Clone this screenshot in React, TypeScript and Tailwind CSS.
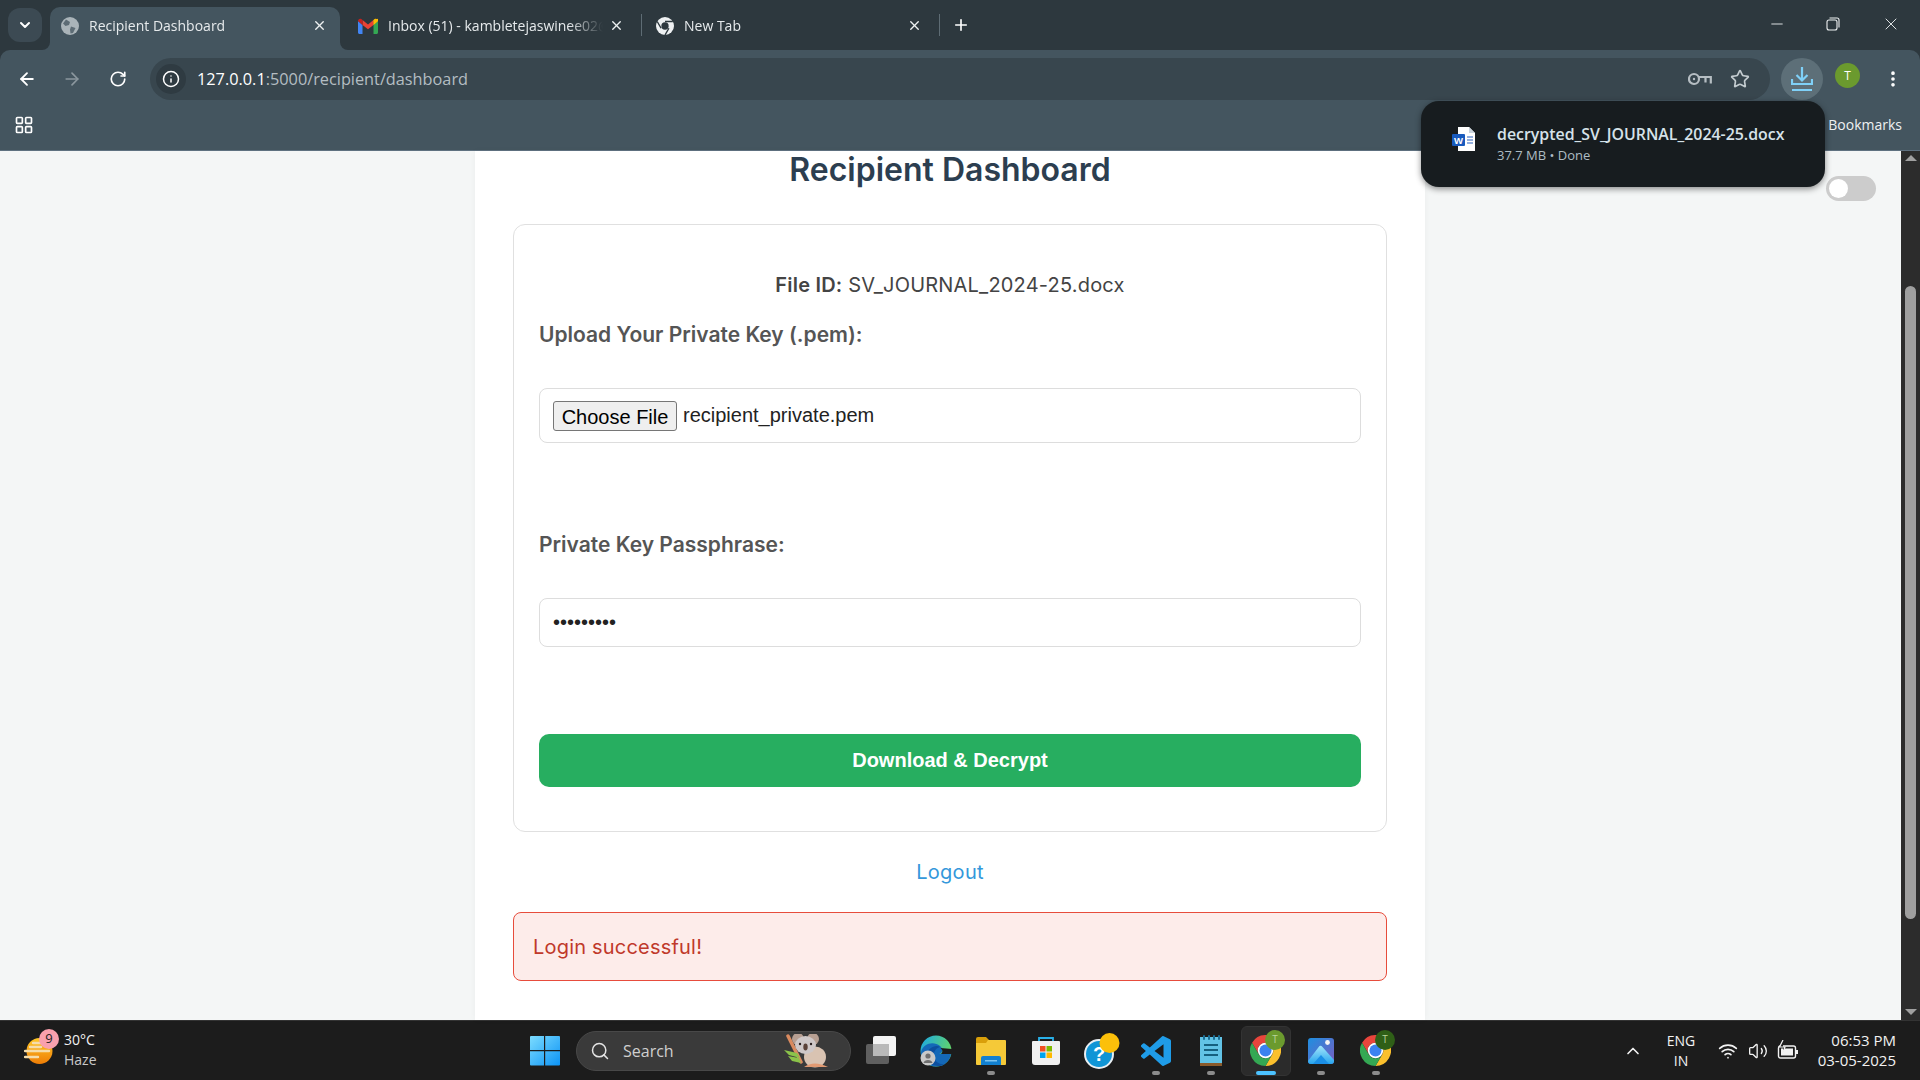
import React from 'react';
import { ArrowLeft, ArrowRight, ChevronDown, ChevronUp, EllipsisVertical, Info, LayoutGrid, Minus, Plus, RotateCw, Search, Star, Volume2, Wifi, X } from 'lucide-react';

const ChromeIcon = ({ size = 32 }: { size?: number }) => (
  <svg width={size} height={size} viewBox="0 0 32 32">
    <path d="M2.14 8A16 16 0 0 1 29.86 8H16A8 8 0 0 0 9.07 20Z" fill="#e8453c" />
    <path d="M29.86 8A16 16 0 0 1 16 32L22.93 20A8 8 0 0 0 16 8Z" fill="#fbc02d" />
    <path d="M16 32A16 16 0 0 1 2.14 8L9.07 20A8 8 0 0 0 22.93 20Z" fill="#34a853" />
    <circle cx="16" cy="16" r="8" fill="#fff" />
    <circle cx="16" cy="16" r="6.2" fill="#3b82f0" />
  </svg>
);

const NewTabIcon = () => (
  <svg width="18" height="18" viewBox="0 0 32 32">
    <circle cx="16" cy="16" r="16" fill="#eef1f2" />
    <path d="M16 8H29.86M9.07 20L2.14 8M22.93 20L16 32" stroke="#2d383e" strokeWidth="2.5" />
    <circle cx="16" cy="16" r="6.5" fill="#2d383e" />
  </svg>
);

const GlobeIcon = () => (
  <svg width="18" height="18" viewBox="0 0 18 18">
    <circle cx="9" cy="9" r="9" fill="#aab4b9" />
    <path d="M5 2.5L9 5 8 8 4.5 9 2 6.5ZM10 9.5L14.5 11 12 16 9.5 16.5 9 12.5Z" fill="#5d6c75" />
  </svg>
);

const GmailIcon = () => (
  <svg width="20" height="16" viewBox="0 0 20 16">
    <path d="M0 3V14.5C0 15.3.7 16 1.5 16H4.5V7Z" fill="#4285f4" />
    <path d="M20 3V14.5C20 15.3 19.3 16 18.5 16H15.5V7Z" fill="#34a853" />
    <path d="M15.5 2L20 0.8V3L15.5 7Z" fill="#fbbc04" />
    <path d="M4.5 2L10 6.5 15.5 2V7L10 11.2 4.5 7Z" fill="#ea4335" />
    <path d="M0 3C0 1 2.5 -.5 4.5 2V7Z" fill="#c5221f" />
    <path d="M15.5 2C17.5 -.5 20 1 20 3L15.5 7Z" fill="#fbbc04" />
  </svg>
);

const KeyIcon = () => (
  <svg width="24" height="14" viewBox="0 0 24 14" fill="none" stroke="#b6bec3" strokeWidth="2.2">
    <circle cx="6" cy="7" r="5" />
    <path d="M11 5H22.8V11.5M17.5 5V10.5" />
    <circle cx="6" cy="7" r="1.2" fill="#b6bec3" stroke="none" />
  </svg>
);

const WordIcon = () => (
  <svg width="24" height="24" viewBox="0 0 24 24">
    <path d="M6 0H17L23 6V24H6Z" fill="#fff" />
    <path d="M17 0L23 6H17Z" fill="#c9d3dc" />
    <path d="M15 10H21M15 13H21M15 16H21" stroke="#2b63c0" strokeWidth="1.2" />
    <rect x="0" y="7" width="13" height="12" rx="1" fill="#185abd" />
    <text x="6.5" y="16.5" textAnchor="middle" fontSize="9.5" fontWeight="700" fontFamily="Liberation Sans" fill="#fff">W</text>
  </svg>
);

const WeatherIcon = () => (
  <svg width="30" height="30" viewBox="0 0 30 30">
    <defs>
      <linearGradient id="sun" x1="0" y1="0" x2="0" y2="1">
        <stop offset="0" stopColor="#ffc928" />
        <stop offset="1" stopColor="#ee7d06" />
      </linearGradient>
    </defs>
    <circle cx="15.5" cy="15" r="13" fill="url(#sun)" />
    <path d="M9 7H19M1 15H25M1 21H14M6 11H17" stroke="#f6ddaa" strokeWidth="2.4" strokeLinecap="round" />
  </svg>
);

const WinLogo = () => (
  <svg width="30" height="30" viewBox="0 0 30 30">
    <defs>
      <linearGradient id="win" x1="0" y1="0" x2="1" y2="1">
        <stop offset="0" stopColor="#7cdcff" />
        <stop offset="1" stopColor="#0c93f5" />
      </linearGradient>
    </defs>
    <path d="M1 0H14V14H0V1Q0 0 1 0ZM15.2 0H29Q30 0 30 1V14H15.2ZM0 15.2H14V29.5H1Q0 29.5 0 28.5ZM15.2 15.2H30V28.5Q30 29.5 29 29.5H15.2Z" fill="url(#win)" />
  </svg>
);

const Koala = () => (
  <svg width="48" height="34" viewBox="0 0 48 34">
    <path d="M4 2L17 28" stroke="#d98a5f" strokeWidth="3.5" strokeLinecap="round" />
    <path d="M0 16L13 19 16 24 5 21ZM4 22L15 24 17 29 8 27Z" fill="#8bc34a" />
    <ellipse cx="31" cy="23" rx="11" ry="10.5" fill="#d9c3b2" />
    <path d="M20 33Q30 26 44 33Z" fill="#e29a72" />
    <circle cx="14" cy="5" r="6" fill="#b79f92" />
    <circle cx="29" cy="5" r="6" fill="#b79f92" />
    <ellipse cx="21.5" cy="11" rx="10.5" ry="9" fill="#cfc8c8" />
    <ellipse cx="21.5" cy="13" rx="2.2" ry="3.4" fill="#5b4238" />
    <circle cx="16" cy="10" r="1.2" fill="#2b2020" />
    <circle cx="27" cy="10" r="1.2" fill="#2b2020" />
  </svg>
);

const TaskView = () => (
  <svg width="30" height="30" viewBox="0 0 30 30">
    <rect x="0" y="8" width="23" height="20" rx="2" fill="#5f5f5f" />
    <rect x="7" y="0" width="23" height="20" rx="2" fill="#f4f4f4" />
    <rect x="7" y="8" width="16" height="12" fill="#b9b9b9" />
  </svg>
);

const EdgeIcon = () => (
  <svg width="32" height="32" viewBox="0 0 32 32">
    <defs>
      <linearGradient id="edge" x1="0" y1="0" x2="1" y2="0.4">
        <stop offset="0" stopColor="#1aa7e8" />
        <stop offset="1" stopColor="#62d46a" />
      </linearGradient>
    </defs>
    <circle cx="16" cy="16" r="15.5" fill="url(#edge)" />
    <path d="M1 17C3 8 14 6 20 11C24 14 22 19 19 19H31C30 27 23 31.5 16 31.5C8 31.5 1 25 1 17Z" fill="#1468b8" />
    <path d="M20.5 13Q24 16 21 19H32V14Z" fill="#1c1c1c" />
    <path d="M7 20C7 13 16 9 20 12C16 13 13 17 14 22C15 27 20 30 25 29C20 33 7 31 7 20Z" fill="#0d4f9e" />
    <circle cx="8" cy="23" r="7.5" fill="#c9c9c9" />
    <circle cx="8" cy="21" r="2.6" fill="#6f6f6f" />
    <path d="M3.5 28C4 24 12 24 12.5 28Z" fill="#6f6f6f" />
  </svg>
);

const FolderIcon = () => (
  <svg width="30" height="28" viewBox="0 0 30 28">
    <path d="M0 2Q0 0 2 0H10L13 3H0Z" fill="#d99f0a" />
    <path d="M0 3H29Q30 3 30 4V27Q30 28 29 28H1Q0 28 0 27Z" fill="#f5c938" />
    <path d="M0 3H12L10 6H0Z" fill="#d99f0a" />
    <path d="M5 28V21Q5 19 7 19H23Q25 19 25 21V28Z" fill="#1280d0" />
    <rect x="9" y="23" width="12" height="1.5" fill="#7cc4f0" />
  </svg>
);

const StoreIcon = () => (
  <svg width="30" height="30" viewBox="0 0 30 30">
    <path d="M8 7V2H22V7" fill="none" stroke="#29b0e8" strokeWidth="1.8" />
    <path d="M2 5H28Q29 5 29 6V26Q29 29 26 29H4Q1 29 1 26V6Q1 5 2 5Z" fill="#f0f0f0" />
    <rect x="9" y="10" width="5.5" height="5.5" fill="#f25022" />
    <rect x="15.5" y="10" width="5.5" height="5.5" fill="#7fba00" />
    <rect x="9" y="16.5" width="5.5" height="5.5" fill="#00a4ef" />
    <rect x="15.5" y="16.5" width="5.5" height="5.5" fill="#ffb900" />
  </svg>
);

const HelpIcon = () => (
  <svg width="36" height="36" viewBox="0 0 36 36" className="ml-[3px]">
    <circle cx="15" cy="21" r="14" fill="#0f95d6" stroke="#e8eef2" strokeWidth="2" />
    <text x="15" y="28" textAnchor="middle" fontSize="20" fontWeight="700" fontFamily="Liberation Sans" fill="#fff">?</text>
    <circle cx="25.5" cy="10" r="10" fill="#fcc00a" />
  </svg>
);

const VsCodeIcon = () => (
  <svg width="30" height="30" viewBox="0 0 24 24">
    <path d="M23.15 2.587L18.21.21a1.494 1.494 0 0 0-1.705.29l-9.46 8.63-4.12-3.128a.999.999 0 0 0-1.276.057L.327 7.261A1 1 0 0 0 .326 8.74L3.899 12 .326 15.26a1 1 0 0 0 .001 1.479L1.65 17.94a.999.999 0 0 0 1.276.057l4.12-3.128 9.46 8.63a1.492 1.492 0 0 0 1.704.29l4.942-2.377A1.5 1.5 0 0 0 24 20.06V3.939a1.5 1.5 0 0 0-.85-1.352zm-5.146 14.861L10.826 12l7.178-5.448v10.896z" fill="#1f9ce8" />
  </svg>
);

const NotepadIcon = () => (
  <svg width="24" height="32" viewBox="0 0 24 32">
    <rect x="1" y="2" width="22" height="27" fill="#62c3e6" />
    <rect x="1" y="28" width="22" height="3" fill="#8a5a2b" />
    <path d="M5 1V4M10 1V4M15 1V4M20 1V4" stroke="#1b6f96" strokeWidth="2" strokeLinecap="round" />
    <path d="M5 10H19M5 15H19M5 20H19" stroke="#16607f" strokeWidth="2" />
  </svg>
);

const PhotosIcon = () => (
  <svg width="26" height="26" viewBox="0 0 26 26">
    <defs>
      <linearGradient id="photo" x1="0" y1="0" x2="1" y2="1">
        <stop offset="0" stopColor="#1e8fe0" />
        <stop offset="1" stopColor="#7a5cc0" />
      </linearGradient>
      <linearGradient id="hill" x1="0" y1="0" x2="0" y2="1">
        <stop offset="0" stopColor="#a4e6fb" />
        <stop offset="1" stopColor="#26a4ee" />
      </linearGradient>
    </defs>
    <rect width="26" height="26" rx="3" fill="url(#photo)" />
    <path d="M0 23L11.5 8Q13 7 14.5 9L26 22V23Q26 26 23 26H3Q0 26 0 23Z" fill="url(#hill)" />
    <path d="M5 26L13 17 21 26Z" fill="#1b8fe6" />
    <circle cx="19.5" cy="4.5" r="2.4" fill="#f4f4f4" />
  </svg>
);

const BatteryIcon = () => (
  <svg width="22" height="22" viewBox="0 0 22 22" fill="none" stroke="#f2f2f2" strokeWidth="1.4">
    <rect x="1.5" y="6" width="17" height="12" rx="2" />
    <rect x="4" y="8.5" width="12" height="7" fill="#f2f2f2" stroke="none" />
    <path d="M20 10V14" strokeWidth="2" />
    <path d="M6 0L2.5 7H8L6 12" strokeWidth="1.2" fill="#1c1c1c" />
  </svg>
);

const Tab = ({ icon, title, className, titleClass = 'text-[#e6eaec]', active = false }: { icon: React.ReactNode; title: string; className: string; titleClass?: string; active?: boolean }) => (
  <div className={`relative h-[43px] flex items-center shrink-0 pb-[6px] ${active ? 'bg-[#44555f] rounded-t-[10px]' : ''} ${className}`}>
    {active && (
      <>
        <div className="absolute bottom-0 -left-[8px] w-[8px] h-[8px] bg-[#44555f]">
          <div className="w-full h-full bg-[#2d383e] rounded-br-[8px]" />
        </div>
        <div className="absolute bottom-0 -right-[8px] w-[8px] h-[8px] bg-[#44555f]">
          <div className="w-full h-full bg-[#2d383e] rounded-bl-[8px]" />
        </div>
      </>
    )}
    <div className="shrink-0 flex items-center justify-center">{icon}</div>
    <span className={`flex-1 min-w-0 ml-[10px] text-[14px] whitespace-nowrap overflow-hidden [mask-image:linear-gradient(to_right,black_84%,transparent)] ${titleClass}`}>{title}</span>
    <X size={15} strokeWidth={2.2} className="shrink-0 text-[#eef1f2] ml-[6px]" />
  </div>
);

const TaskIcon = ({ children, dot = false }: { children: React.ReactNode; dot?: boolean }) => (
  <div className="relative w-[55px] h-[60px] shrink-0 flex items-center justify-center">
    {children}
    {dot && <div className="absolute bottom-[6px] left-[24px] w-[8px] h-[4px] rounded-full bg-[#8c8c8c]" />}
  </div>
);

const Badge = ({ className }: { className: string }) => (
  <div className={`absolute top-[9px] left-[27px] w-[20px] h-[20px] rounded-full flex items-center justify-center text-[10px] text-[#b9d39a] ${className}`}>T</div>
);

export default function App() {
  return (
    <div className="h-screen w-full flex flex-col overflow-hidden relative bg-[#2d383e] font-['Open_Sans',sans-serif]">
      {/* Tab strip */}
      <div className="h-[50px] shrink-0 flex items-end relative">
        <div className="absolute left-[8px] top-[8px] w-[34px] h-[34px] rounded-[12px] bg-[#3c4a53] flex items-center justify-center">
          <ChevronDown size={16} strokeWidth={3} className="text-white" />
        </div>
        <div className="w-[50px] shrink-0" />
        <Tab active icon={<GlobeIcon />} title="Recipient Dashboard" className="w-[290px] pl-[11px] pr-[13px]" />
        <Tab icon={<GmailIcon />} title="Inbox (51) - kambletejaswinee02@gmail.com" className="w-[301px] pl-[18px] pr-[17px]" />
        <div className="w-px h-[22px] bg-[#5e6c74] mb-[14px]" />
        <Tab icon={<NewTabIcon />} title="New Tab" className="w-[297px] pl-[14px] pr-[17px]" />
        <div className="w-px h-[22px] bg-[#5e6c74] mb-[14px]" />
        <Plus size={18} strokeWidth={2.2} className="ml-[12px] mb-[16px] text-white" />
        <div className="ml-auto flex items-center h-full pb-[2px] text-[#eef1f2]">
          <Minus size={18} strokeWidth={1.2} className="mr-[40px]" />
          <svg width="14" height="14" viewBox="0 0 14 14" fill="none" stroke="#eef1f2" strokeWidth="1.1" className="mr-[41px]">
            <rect x="1" y="3" width="10" height="10" rx="2" />
            <path d="M3.5 1H11Q13 1 13 3V10.5" />
          </svg>
          <X size={20} strokeWidth={1.1} className="mr-[19px]" />
        </div>
      </div>

      {/* Toolbar */}
      <div className="h-[50px] shrink-0 flex items-start pt-[8px] bg-[#44555f] rounded-t-[10px]">
        <div className="w-[150px] h-[42px] shrink-0 flex items-center">
          <ArrowLeft size={20} strokeWidth={2.2} className="ml-[17px] text-white" />
          <ArrowRight size={20} strokeWidth={2} className="ml-[25px] text-[#8b979e]" />
          <RotateCw size={18} strokeWidth={2.2} className="ml-[27px] text-white" />
        </div>
        <div className="w-[1620px] h-[42px] shrink-0 rounded-full bg-[#38464e] flex items-center pl-[6px] pr-[20px]">
          <div className="w-[30px] h-[30px] rounded-full bg-[#2f3b42] flex items-center justify-center">
            <Info size={18} strokeWidth={2} className="text-white" />
          </div>
          <span className="ml-[11px] pt-[1px] text-[16.3px] text-white">127.0.0.1<span className="text-[#b4bdc2]">:5000/recipient/dashboard</span></span>
          <div className="ml-auto flex items-center gap-[18px]">
            <KeyIcon />
            <Star size={20} strokeWidth={2} className="text-[#c4ccd0]" />
          </div>
        </div>
        <div className="ml-[11px] w-[42px] h-[42px] rounded-full bg-[#5d6f78] flex items-center justify-center">
          <svg width="22" height="26" viewBox="0 0 22 26" fill="none" stroke="#7fd0f7" strokeWidth="2.2">
            <path d="M11 1V14M5.5 9L11 14.5 16.5 9M1 13V18H21V13M1 24H21" />
          </svg>
        </div>
        <div className="ml-[12px] mt-[5px] w-[25px] h-[25px] rounded-full bg-[#6b9a2e] flex items-center justify-center text-[12px] text-white">T</div>
        <EllipsisVertical size={20} strokeWidth={2.4} className="ml-[23px] mt-[11px] text-white" />
      </div>

      {/* Bookmarks bar */}
      <div className="h-[51px] shrink-0 flex items-center bg-[#44555f] border-b border-[#5f7180] pl-[14px] pr-[18px]">
        <LayoutGrid size={20} strokeWidth={2} className="text-white" />
        <span className="ml-auto pb-[1px] text-[14px] text-[#eef1f2]">Bookmarks</span>
      </div>

      {/* Page */}
      <div className="flex-1 min-h-0 flex relative">
        <div className="flex-1 min-w-0 bg-[#f4f6f6]">
          <div className="w-[950px] h-full ml-[475px] bg-white px-[38px] font-['Inter',sans-serif] shadow-[0_0_6px_rgba(0,0,0,0.04)]">
            <h1 className="h-[36px] leading-[38px] text-center text-[32px] font-semibold text-[#2c3e50]">Recipient Dashboard</h1>
            <div className="mt-[37px] border border-[#e0e0e0] rounded-[12px] px-[25px] pt-[45px] pb-[44px]">
              <p className="h-[30px] leading-[30px] text-center text-[20px] tracking-[0.2px] text-[#444]"><span className="font-semibold">File ID:</span> SV_JOURNAL_2024-25.docx</p>
              <label className="block mt-[20px] h-[30px] leading-[30px] text-[21px] font-semibold text-[#555]">Upload Your Private Key (.pem):</label>
              <div className="mt-[38px] h-[55px] border border-[#ddd] rounded-[8px] flex items-center pl-[13px] font-['Liberation_Sans',sans-serif] text-[20px] text-[#222]">
                <button className="w-[124px] h-[30px] pb-[4px] bg-[#efefef] border border-[#767676] rounded-[3px] text-black text-[20px]">Choose File</button>
                <span className="ml-[6px] mb-[2px]">recipient_private.pem</span>
              </div>
              <label className="block mt-[87px] h-[30px] leading-[30px] text-[21px] font-semibold text-[#555]">Private Key Passphrase:</label>
              <input type="password" readOnly value="123456789" className="mt-[38px] block w-full h-[49px] border border-[#ddd] rounded-[8px] pl-[13px] font-['Liberation_Sans',sans-serif] text-[20px] text-[#222] outline-none" />
              <button className="mt-[87px] w-full h-[53px] pb-[2px] bg-[#27ae60] rounded-[10px] text-white text-[20px] font-bold font-['Liberation_Sans',sans-serif]">Download &amp; Decrypt</button>
            </div>
            <p className="mt-[25px] h-[30px] leading-[30px] text-center text-[20px] tracking-[0.3px] text-[#3498db]">Logout</p>
            <div className="mt-[25px] h-[69px] border border-[#e74c3c] rounded-[8px] bg-[#fdecea] flex items-center pl-[19px] text-[20px] tracking-[0.2px] text-[#c0392b]">Login successful!</div>
          </div>
        </div>
        {/* Scrollbar */}
        <div className="w-[19px] shrink-0 bg-[#2c2c2c] flex flex-col items-center">
          <div className="mt-[4px] w-0 h-0 border-x-[6px] border-x-transparent border-b-[6px] border-b-[#a0a0a0]" />
          <div className="mt-[125px] w-[11px] h-[633px] rounded-full bg-[#9f9f9f]" />
          <div className="mt-auto mb-[5px] w-0 h-0 border-x-[6px] border-x-transparent border-t-[6px] border-t-[#a0a0a0]" />
        </div>
        {/* Dark mode toggle */}
        <div className="absolute top-[25px] left-[1826px] w-[50px] h-[25px] rounded-full bg-[#cccccc] flex items-center pl-[3px]">
          <div className="w-[19px] h-[19px] rounded-full bg-white" />
        </div>
      </div>

      {/* Download bubble */}
      <div className="absolute left-[1421px] top-[101px] w-[404px] h-[86px] rounded-[18px] bg-[#171c1f] shadow-[0_2px_6px_rgba(0,0,0,0.45)] flex items-center pl-[31px]">
        <div className="mb-[10px]"><WordIcon /></div>
        <div className="ml-[21px] flex flex-col">
          <span className="text-[15.9px] font-semibold leading-[22px] text-[#d6e2e9]">decrypted_SV_JOURNAL_2024-25.docx</span>
          <span className="text-[13px] leading-[20px] text-[#aebcc4]">37.7 MB • Done</span>
        </div>
      </div>

      {/* Taskbar */}
      <div className="h-[60px] shrink-0 flex items-center bg-[#1c1c1c] border-t border-[#333] text-[#f2f2f2] font-['Open_Sans',sans-serif]">
        <div className="relative w-[517px] h-full shrink-0 flex items-center pl-[24px]">
          <WeatherIcon />
          <div className="absolute left-[39px] top-[8px] w-[20px] h-[20px] rounded-full bg-[#f9a0ad] flex items-center justify-center text-[13px] text-[#222]">9</div>
          <div className="ml-[10px] pb-[2px] flex flex-col text-[14px] leading-[20px]">
            <span>30°C</span>
            <span className="text-[#c8c8c8]">Haze</span>
          </div>
        </div>
        <TaskIcon><WinLogo /></TaskIcon>
        <div className="ml-[4px] w-[275px] h-[40px] shrink-0 rounded-full bg-[#3a3a3a] border border-[#484848] flex items-center pl-[13px] pr-[18px]">
          <Search size={20} strokeWidth={1.8} className="text-[#e4e4e4]" />
          <span className="ml-[13px] text-[16px] text-[#cfcfcf]">Search</span>
          <div className="ml-auto"><Koala /></div>
        </div>
        <div className="ml-[2px]"><TaskIcon><TaskView /></TaskIcon></div>
        <TaskIcon><EdgeIcon /></TaskIcon>
        <TaskIcon dot><FolderIcon /></TaskIcon>
        <TaskIcon><StoreIcon /></TaskIcon>
        <TaskIcon><HelpIcon /></TaskIcon>
        <TaskIcon dot><VsCodeIcon /></TaskIcon>
        <TaskIcon dot><NotepadIcon /></TaskIcon>
        <TaskIcon>
          <div className="absolute top-[5px] left-[3px] w-[50px] h-[50px] rounded-[6px] bg-[#2b2b2b] border border-[#333]" />
          <div className="relative"><ChromeIcon size={31} /></div>
          <Badge className="bg-[#6b9a2e]" />
          <div className="absolute bottom-[6px] left-[18px] w-[20px] h-[4px] rounded-full bg-[#4cc2ff]" />
        </TaskIcon>
        <TaskIcon dot><PhotosIcon /></TaskIcon>
        <TaskIcon dot>
          <ChromeIcon size={31} />
          <Badge className="bg-[#2f5f17]" />
        </TaskIcon>
        <div className="ml-auto w-[308px] h-full shrink-0 flex items-center pr-[24px]">
          <div className="w-[41px] flex justify-center"><ChevronUp size={20} strokeWidth={2} /></div>
          <div className="w-[56px] flex flex-col items-center text-[14px] leading-[20px]">
            <span>ENG</span>
            <span>IN</span>
          </div>
          <div className="ml-[4px] w-[30px] flex justify-center"><Wifi size={20} strokeWidth={2} /></div>
          <div className="w-[30px] flex justify-center"><Volume2 size={20} strokeWidth={1.6} /></div>
          <div className="w-[30px] flex justify-center"><BatteryIcon /></div>
          <div className="flex-1 pb-[2px] flex flex-col items-end text-[15px] leading-[20px]">
            <span>06:53 PM</span>
            <span>03-05-2025</span>
          </div>
        </div>
      </div>
    </div>
  );
}
